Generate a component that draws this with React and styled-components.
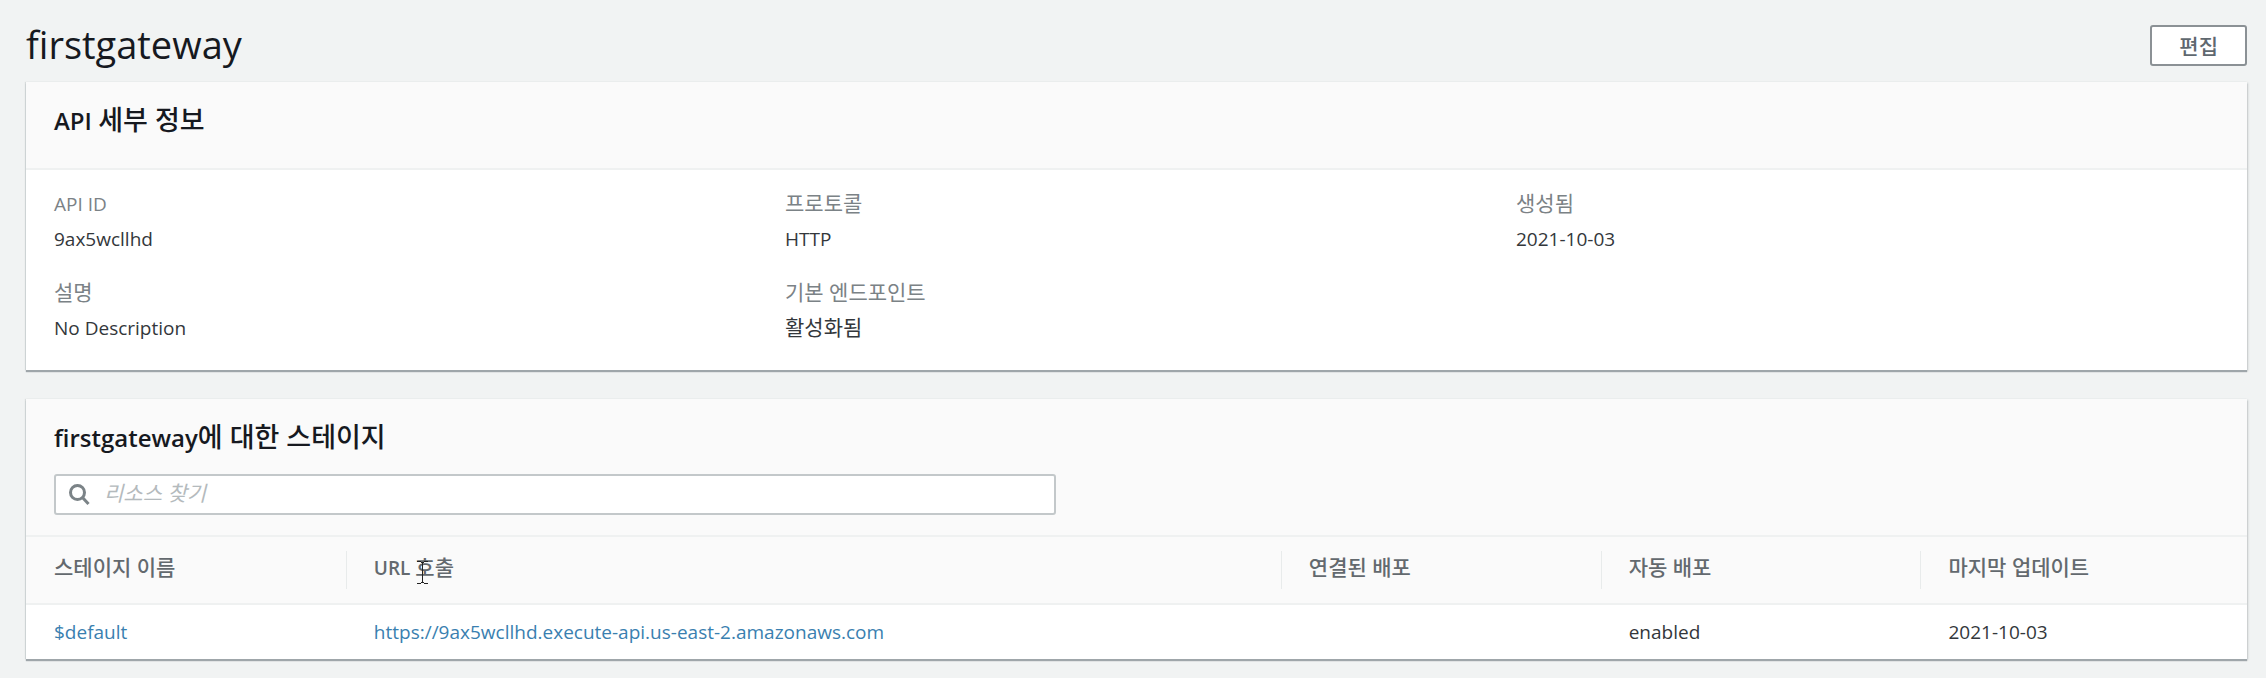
import React from 'react';
import styled, { createGlobalStyle } from 'styled-components';

const GlobalStyle = createGlobalStyle`
  * { box-sizing: border-box; }
  body {
    margin: 0;
    background: #f1f3f3;
    color: #33373b;
    font-family: "Open Sans", "Noto Sans CJK KR", sans-serif;
    font-size: 19px;
    line-height: 28px;
  }
`;

const Page = styled.main`
  padding: 25px 19px 18px 26px;
`;

const PageHeader = styled.header`
  display: flex;
  justify-content: space-between;
  align-items: flex-start;
  height: 57px;
`;

const PageTitle = styled.h1`
  margin: 0;
  color: #16191f;
  font-size: 38px;
  font-weight: 400;
  line-height: 38px;
`;

const Button = styled.button`
  height: 41px;
  padding: 0 27px;
  border: 2px solid #8b9195;
  border-radius: 3px;
  background: #fff;
  color: #5f686f;
  font-family: inherit;
  font-size: 21px;
  font-weight: 500;
  line-height: 34px;
`;

const Card = styled.section`
  background: #fff;
  box-shadow: 0 2px 1px #9fa6aa, 1px 1px 2px #c9cdce, -1px 0 1px #d9dddd;
  & + & { margin-top: 29px; }
`;

const CardHeader = styled.div`
  padding: 24px 28px ${(p) => (p.$tall ? '33px' : '20px')};
  border-bottom: 2px solid #eff1f1;
  background: #fafafa;
`;

const CardTitle = styled.h2`
  margin: 0;
  color: #16191f;
  font-size: 24px;
  font-weight: 600;
  line-height: 28px;
`;

const TitleHangul = styled.span`
  font-size: 27px;
  font-weight: 500;
  line-height: 1;
`;

const Hangul = styled.span`
  font-size: 21px;
  font-weight: ${(p) => (p.$medium ? 500 : 400)};
  line-height: 1;
`;

const Details = styled.dl`
  display: grid;
  grid-template-columns: repeat(3, minmax(0, 1fr));
  gap: 20px 28px;
  margin: 0;
  padding: 19px 28px 23px;
`;

const Label = styled.dt`
  height: 35px;
  color: #7b8286;
  line-height: 30px;
`;

const Value = styled.dd`
  height: 34px;
  margin: 0;
  line-height: 30px;
`;

const SearchBox = styled.label`
  display: flex;
  align-items: center;
  gap: 14px;
  width: 1002px;
  max-width: 100%;
  height: 41px;
  margin-top: 22px;
  padding: 0 12px;
  border: 2px solid #c3c8ca;
  border-radius: 3px;
  background: #fff;
`;

const SearchInput = styled.input`
  flex: 1;
  min-width: 0;
  padding: 0 0 3px;
  border: 0;
  outline: 0;
  background: none;
  color: inherit;
  font: inherit;
  font-size: 21px;
  &::placeholder {
    color: #b4babd;
    font-style: italic;
    opacity: 1;
  }
`;

const Table = styled.table`
  width: 100%;
  table-layout: fixed;
  border-collapse: separate;
  border-spacing: 0;
  text-align: left;
`;

const HeadCell = styled.th`
  height: 68px;
  padding: 0;
  border-bottom: 2px solid #eff1f1;
  background: #fafafa;
  color: #63696e;
  font-weight: 600;
`;

const HeadLabel = styled.div`
  position: relative;
  height: 38px;
  padding-left: ${(p) => (p.$first ? '28px' : '27px')};
  border-left: ${(p) => (p.$first ? '0' : '1px solid #e8ebeb')};
  line-height: 35px;
`;

const Cell = styled.td`
  height: 54px;
  padding: 0 0 0 28px;
`;

const Link = styled.a`
  color: #3a7fb0;
  text-decoration: none;
`;

const Pointer = styled.svg`
  position: absolute;
  top: 10px;
  left: 70px;
`;

const columns = [
  { name: '스테이지 이름', width: '14.4%' },
  { name: 'URL 호출', width: '42.1%' },
  { name: '연결된 배포', width: '14.4%' },
  { name: '자동 배포', width: '14.4%' },
  { name: '마지막 업데이트', width: '14.7%' },
];

const fields = [
  ['API ID', '9ax5wcllhd'],
  ['프로토콜', 'HTTP'],
  ['생성됨', '2021-10-03'],
  ['설명', 'No Description'],
  ['기본 엔드포인트', '활성화됨'],
];

const invokeUrl = 'https://9ax5wcllhd.execute-api.us-east-2.amazonaws.com';

// Hangul is set a step larger than the Latin text around it.
function Mixed({ text, medium }) {
  return text
    .split(/([가-힣]+(?: [가-힣]+)*)/)
    .filter(Boolean)
    .map((part, i) =>
      /[가-힣]/.test(part) ? <Hangul key={i} $medium={medium}>{part}</Hangul> : part
    );
}

function SearchIcon() {
  return (
    <svg width="22" height="23" viewBox="0 0 22 23" fill="none" stroke="#7b8387" strokeWidth="3" aria-hidden="true">
      <circle cx="9.500" cy="9.500" r="7" />
      <path d="M14.500 14.500l6 6.500" />
    </svg>
  );
}

function TextPointer() {
  return (
    <Pointer width="11" height="23" viewBox="0 0 11 23" fill="none" stroke="#222" aria-hidden="true">
      <path d="M0 .5h4M7 .5h4M4 1.500h3M5.500 2v19M4 21.500h3M0 22.500h4M7 22.500h4" />
    </Pointer>
  );
}

export default function App() {
  return (
    <Page>
      <GlobalStyle />
      <PageHeader>
        <PageTitle>firstgateway</PageTitle>
        <Button type="button">편집</Button>
      </PageHeader>
      <Card>
        <CardHeader $tall>
          <CardTitle>API <TitleHangul>세부 정보</TitleHangul></CardTitle>
        </CardHeader>
        <Details>
          {fields.map(([label, value]) => (
            <div key={label}>
              <Label><Mixed text={label} /></Label>
              <Value><Mixed text={value} /></Value>
            </div>
          ))}
        </Details>
      </Card>
      <Card>
        <CardHeader>
          <CardTitle>firstgateway<TitleHangul>에 대한 스테이지</TitleHangul></CardTitle>
          <SearchBox>
            <SearchIcon />
            <SearchInput type="search" placeholder="리소스 찾기" aria-label="리소스 찾기" />
          </SearchBox>
        </CardHeader>
        <Table>
          <colgroup>
            {columns.map((c) => (
              <col key={c.name} style={{ width: c.width }} />
            ))}
          </colgroup>
          <thead>
            <tr>
              {columns.map((c, i) => (
                <HeadCell key={c.name} scope="col">
                  <HeadLabel $first={i === 0}>
                    <Mixed text={c.name} medium />
                    {i === 1 && <TextPointer />}
                  </HeadLabel>
                </HeadCell>
              ))}
            </tr>
          </thead>
          <tbody>
            <tr>
              <Cell><Link href="#default">$default</Link></Cell>
              <Cell><Link href={invokeUrl}>{invokeUrl}</Link></Cell>
              <Cell />
              <Cell>enabled</Cell>
              <Cell>2021-10-03</Cell>
            </tr>
          </tbody>
        </Table>
      </Card>
    </Page>
  );
}
